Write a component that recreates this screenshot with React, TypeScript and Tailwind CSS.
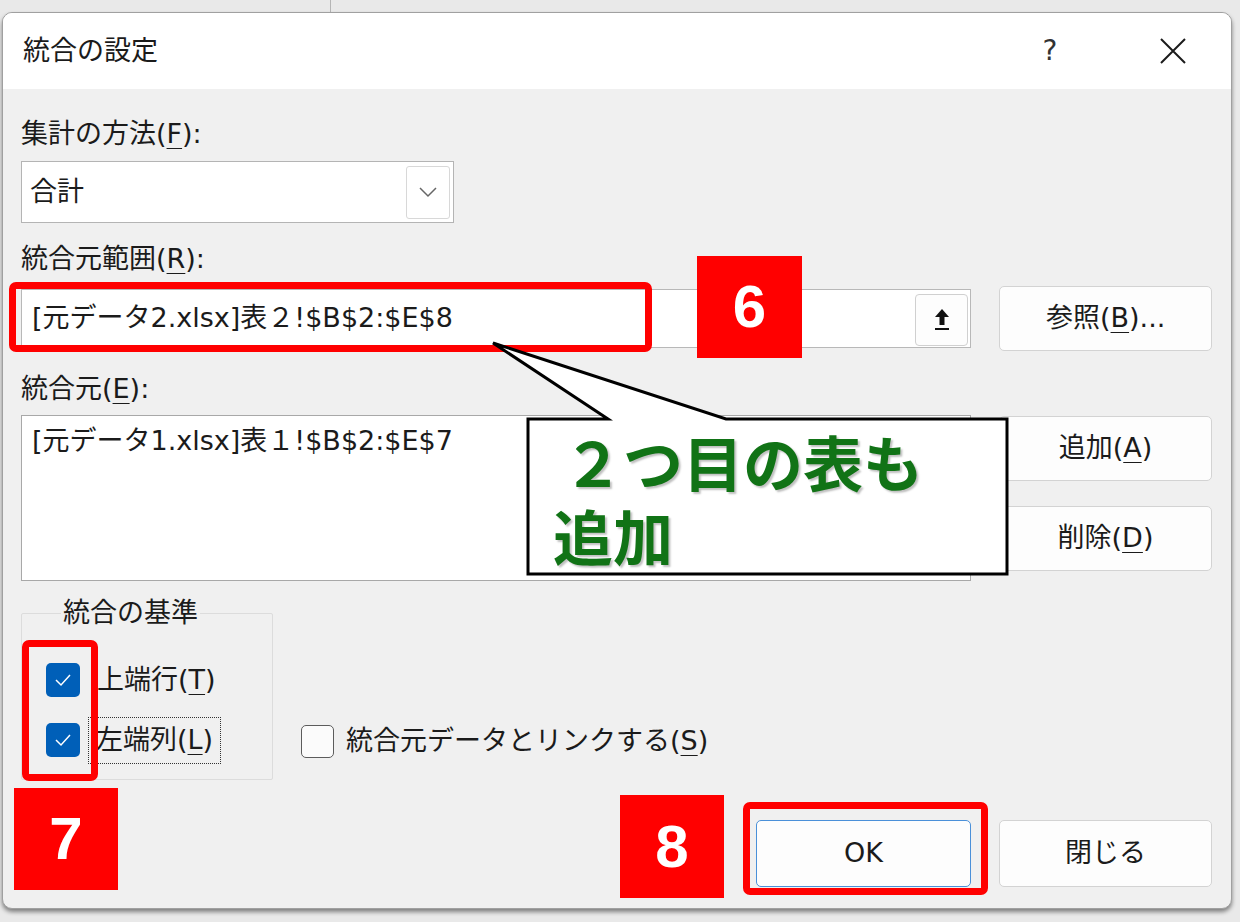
import React from 'react';

const jp = { fontFamily: '"DejaVu Sans", "Noto Sans CJK JP", sans-serif' };
const badgeFont = { fontFamily: '"Liberation Sans Narrow", "Liberation Sans", Arial, sans-serif' };

const U = ({ children }: { children: React.ReactNode }) => (
  <span className="underline decoration-1 underline-offset-[5px]">{children}</span>
);

const WinButton = ({ children, className = '' }: { children: React.ReactNode; className?: string }) => (
  <div
    className={`flex items-center justify-center w-[213px] rounded-[5px] border border-[#d3d3d3] bg-[#fdfdfd] text-[27px] text-[#1b1b1b] ${className}`}
  >
    {children}
  </div>
);

const CheckedBox = () => (
  <div className="w-[34px] h-[34px] rounded-[5px] bg-[#005fb8] flex items-center justify-center shrink-0">
    <svg width="22" height="22" viewBox="0 0 22 22">
      <path d="M4 11 L9 16 L18 6" fill="none" stroke="#ffffff" strokeWidth="1.5" />
    </svg>
  </div>
);

const Badge = ({ n, className }: { n: string; className: string }) => (
  <div
    className={`absolute bg-[#ff0000] text-white flex items-center justify-center text-[60px] font-bold leading-none ${className}`}
    style={badgeFont}
  >
    {n}
  </div>
);

export default function App() {
  return (
    <div className="relative w-[1240px] h-[922px] bg-[#e9e9e9] overflow-hidden pt-[12px] pl-[2px]" style={jp}>
      {/* excel background bits */}
      <div className="absolute top-0 left-[330px] w-px h-[12px] bg-[#b5b5b5]" />

      {/* dialog */}
      <div className="relative w-[1230px] h-[897px] flex flex-col rounded-[10px] border border-[#a0a0a0] bg-[#f0f0f0] shadow-[0_3px_4px_rgba(0,0,0,0.45)] overflow-hidden">
        <div className="h-[76px] bg-white flex items-center pl-[20px] pr-[38px] shrink-0">
          <span className="text-[27px] text-[#1b1b1b]">統合の設定</span>
          <span className="ml-auto w-[40px] text-center text-[28px] text-[#333]">?</span>
          <div className="ml-[83px] w-[40px] flex justify-center">
            <svg width="28" height="28" viewBox="0 0 28 28">
              <path d="M2 2 L26 26 M26 2 L2 26" stroke="#1b1b1b" strokeWidth="2" />
            </svg>
          </div>
        </div>

        <div className="flex-1 flex flex-col pl-[18px] pr-[19px] text-[#1b1b1b]">
          <div className="mt-[27px] text-[27px] leading-[36px]">
            集計の方法(<U>F</U>):
          </div>
          <div className="mt-[9px] w-[433px] h-[62px] border border-[#b4b4b4] bg-white flex items-center pl-[8px] pr-[3px]">
            <span className="text-[27px]">合計</span>
            <div className="ml-auto w-[44px] h-[53px] rounded-[3px] border border-[#d8d8d8] flex items-center justify-center">
              <svg width="20" height="12" viewBox="0 0 20 12">
                <path d="M2 2 L10 10 L18 2" fill="none" stroke="#666" strokeWidth="1.5" />
              </svg>
            </div>
          </div>

          <div className="mt-[18px] text-[27px] leading-[36px]">
            統合元範囲(<U>R</U>):
          </div>
          <div className="mt-[9px] h-[65px] flex items-center">
            <div className="w-[952px] h-[59px] border border-[#b8b8b8] bg-white flex items-center pl-[10px] pr-[2px]">
              <span className="text-[27px]">[元データ2.xlsx]表２!$B$2:$E$8</span>
              <div className="ml-auto w-[53px] h-[52px] mt-[2px] rounded-[4px] border border-[#d0d0d0] bg-[#fdfdfd] flex items-center justify-center">
                <svg width="24" height="26" viewBox="0 0 24 26">
                  <path d="M12 2 L5 10 H9.5 V18 H14.5 V10 H19 Z" fill="#111" />
                  <rect x="5" y="21" width="14" height="2" fill="#111" />
                </svg>
              </div>
            </div>
            <WinButton className="ml-[28px] h-[65px]">
              参照(<U>B</U>)...
            </WinButton>
          </div>

          <div className="mt-[20px] text-[27px] leading-[36px]">
            統合元(<U>E</U>):
          </div>
          <div className="mt-[8px] flex">
            <div className="w-[952px] h-[166px] border border-[#a8a8a8] bg-white pl-[10px] pt-[7px]">
              <span className="text-[27px] leading-[36px]">[元データ1.xlsx]表１!$B$2:$E$7</span>
            </div>
            <div className="ml-[28px] pt-px flex flex-col gap-[25px]">
              <WinButton className="h-[65px]">
                追加(<U>A</U>)
              </WinButton>
              <WinButton className="h-[65px]">
                削除(<U>D</U>)
              </WinButton>
            </div>
          </div>

          <div className="mt-[14px] flex">
            <fieldset className="w-[252px] border border-[#dcdcdc] rounded-[2px] pl-[24px] pt-[25px] pb-[15px] flex flex-col gap-[12px]">
              <legend className="ml-[15px] px-[2px] text-[27px] leading-[36px]">統合の基準</legend>
              <div className="h-[48px] flex items-center">
                <CheckedBox />
                <span className="ml-[17px] text-[27px]">
                  上端行(<U>T</U>)
                </span>
              </div>
              <div className="h-[48px] flex items-center">
                <CheckedBox />
                <span className="ml-[8px] px-[7px] h-[47px] flex items-center border border-dotted border-[#333] text-[27px]">
                  <span>
                    左端列(<U>L</U>)
                  </span>
                </span>
              </div>
            </fieldset>
            <div className="self-end mb-[15px] ml-[28px] h-[48px] flex items-center">
              <div className="w-[33px] h-[33px] rounded-[5px] border-[1.5px] border-[#5c5c5c] bg-[#fbfbfb]" />
              <span className="ml-[12px] text-[27px]">
                統合元データとリンクする(<U>S</U>)
              </span>
            </div>
          </div>

          <div className="mt-[40px] flex justify-end gap-[28px]">
            <div className="w-[215px] h-[67px] rounded-[5px] border-[1.5px] border-[#4a90d9] bg-[#fdfdfd] flex items-center justify-center text-[27px]">
              OK
            </div>
            <WinButton className="h-[67px]">閉じる</WinButton>
          </div>
        </div>
      </div>

      {/* annotations */}
      <div className="absolute left-[9px] top-[282px] w-[643px] h-[70px] border-[7px] border-[#ff0000] rounded-[7px]" />
      <Badge n="6" className="left-[697px] top-[256px] w-[105px] h-[102px]" />

      <svg className="absolute left-0 top-0" width="1240" height="922" viewBox="0 0 1240 922">
        <path
          d="M528 419 L608 419 L493 343 L726 419 L1007 419 L1007 574 L528 574 Z"
          fill="#ffffff"
          stroke="#000000"
          strokeWidth="3"
          strokeLinejoin="miter"
        />
      </svg>
      <p
        className="absolute left-[553px] top-[424px] text-[60px] font-bold leading-[74px] text-[#117316] [text-shadow:2px_2px_2px_rgba(0,0,0,0.25)]"
        style={{ fontFamily: '"Noto Sans CJK JP", sans-serif' }}
      >
        <span className="pl-[10px]">２つ目の表も</span>
        <br />
        追加
      </p>

      <div className="absolute left-[22px] top-[640px] w-[76px] h-[141px] border-[7px] border-[#ff0000] rounded-[7px]" />
      <Badge n="7" className="left-[14px] top-[788px] w-[104px] h-[102px]" />
      <Badge n="8" className="left-[620px] top-[795px] w-[104px] h-[103px]" />
      <div className="absolute left-[743px] top-[802px] w-[245px] h-[93px] border-[7px] border-[#ff0000] rounded-[7px]" />
    </div>
  );
}
